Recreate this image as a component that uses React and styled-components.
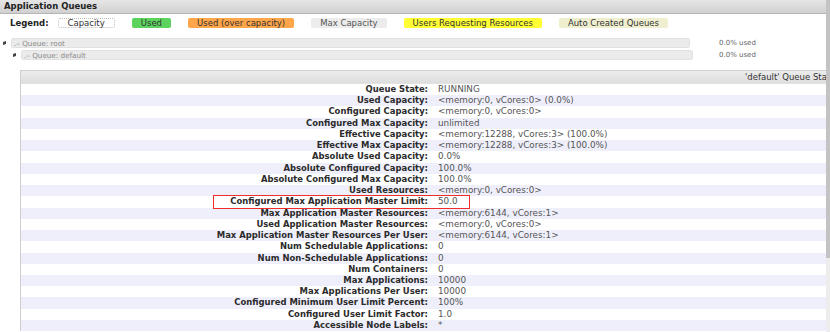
import React from 'react'
import styled, { createGlobalStyle } from 'styled-components'

const GlobalStyle = createGlobalStyle`
  html, body {
    margin: 0;
    padding: 0;
    background: #fff;
    overflow: hidden;
  }
  body {
    font-family: "DejaVu Sans", Verdana, sans-serif;
    color: #333;
  }
`

const Page = styled.div`
  display: flex;
  width: 830px;
  height: 332px;
  overflow: hidden;
`

const Main = styled.div`
  flex: 1;
  min-width: 0;
`

const Scrollbar = styled.div`
  width: 4px;
  flex-shrink: 0;
  background: #ededed;
`

const Thumb = styled.div`
  height: 258px;
  background: #c3c3c3;
`

const Header = styled.div`
  height: 13px;
  line-height: 13px;
  padding-left: 4px;
  background: linear-gradient(#e6e6e6, #d0d0d0);
  border-bottom: 1px solid #b5b5b5;
  font-size: 8.5px;
  font-weight: bold;
  color: #222;
`

const Legend = styled.div`
  display: flex;
  align-items: center;
  gap: 17px;
  margin-top: 4px;
  padding-left: 10px;
  height: 10px;
  font-size: 8.5px;
`

const LegendTitle = styled.span`
  font-weight: bold;
  color: #222;
  margin-right: -8px;
`

const LegendBox = styled.span`
  display: inline-block;
  box-sizing: border-box;
  height: 10px;
  padding: 0 9px;
  border-radius: 2px;
  background: ${p => p.$bg};
  color: ${p => p.$color || '#333'};
  border: ${p => p.$border || 'none'};
  line-height: ${p => (p.$border ? '8px' : '10px')};
`

const Tree = styled.div`
  margin-top: 10px;
  display: flex;
  flex-direction: column;
  gap: 2px;
`

const TreeRow = styled.div`
  display: flex;
  align-items: center;
  height: 10px;
`

const Lead = styled.div`
  display: flex;
  align-items: center;
  width: 716px;
  padding-left: ${p => p.$indent}px;
  box-sizing: border-box;
`

const Bullet = styled.svg`
  width: 4px;
  height: 4px;
  margin-right: 4px;
  flex-shrink: 0;
`

const Bar = styled.div`
  box-sizing: border-box;
  width: ${p => p.$width}px;
  height: 10px;
  line-height: 9px;
  border: 1px dotted #d6d6d6;
  border-radius: 3px;
  background: #ebebeb;
  font-size: 7.2px;
  color: #8a8a8a;
  padding-left: 2px;
  white-space: nowrap;
`

const Used = styled.span`
  font-size: 7px;
  color: #666;
  padding-left: 3px;
`

const Panel = styled.div`
  margin-top: 10px;
  margin-left: 20px;
  border-top: 1px solid #cfcfcf;
  border-left: 1px solid #cfcfcf;
`

const PanelHead = styled.div`
  height: 12px;
  line-height: 12px;
  background: linear-gradient(#ececec, #dedede);
  border-bottom: 1px solid #e2e2e2;
  font-size: 8.5px;
  color: #333;
  padding-left: 724px;
  white-space: nowrap;
  overflow: hidden;
`

const Row = styled.div`
  position: relative;
  display: grid;
  grid-template-columns: 407px 1fr;
  column-gap: 10px;
  height: 11.24px;
  line-height: 11.24px;
  white-space: nowrap;
  background: ${p => (p.$odd ? '#efeffc' : '#fff')};
`

const Label = styled.div`
  text-align: right;
  font-size: 8.45px;
  font-weight: bold;
  color: #2b2b2b;
`

const Value = styled.div`
  font-size: 8.8px;
  color: #555;
`

const Highlight = styled.div`
  position: absolute;
  z-index: 2;
  left: 192px;
  width: 257px;
  top: -1px;
  bottom: -1px;
  border: 1px solid #f02c2c;
  box-sizing: border-box;
  pointer-events: none;
`

const legend = [
  { text: 'Capacity', bg: '#fff', border: '1px dotted #bbb' },
  { text: 'Used', bg: '#5cd35c' },
  { text: 'Used (over capacity)', bg: '#ffa54a' },
  { text: 'Max Capacity', bg: '#ececec', color: '#555' },
  { text: 'Users Requesting Resources', bg: '#ffff33' },
  { text: 'Auto Created Queues', bg: '#efefcf' },
]

const queues = [
  { name: 'root', indent: 3, width: 679 },
  { name: 'default', indent: 13, width: 672 },
]

const rows = [
  ['Queue State:', 'RUNNING'],
  ['Used Capacity:', '<memory:0, vCores:0> (0.0%)'],
  ['Configured Capacity:', '<memory:0, vCores:0>'],
  ['Configured Max Capacity:', 'unlimited'],
  ['Effective Capacity:', '<memory:12288, vCores:3> (100.0%)'],
  ['Effective Max Capacity:', '<memory:12288, vCores:3> (100.0%)'],
  ['Absolute Used Capacity:', '0.0%'],
  ['Absolute Configured Capacity:', '100.0%'],
  ['Absolute Configured Max Capacity:', '100.0%'],
  ['Used Resources:', '<memory:0, vCores:0>'],
  ['Configured Max Application Master Limit:', '50.0', true],
  ['Max Application Master Resources:', '<memory:6144, vCores:1>'],
  ['Used Application Master Resources:', '<memory:0, vCores:0>'],
  ['Max Application Master Resources Per User:', '<memory:6144, vCores:1>'],
  ['Num Schedulable Applications:', '0'],
  ['Num Non-Schedulable Applications:', '0'],
  ['Num Containers:', '0'],
  ['Max Applications:', '10000'],
  ['Max Applications Per User:', '10000'],
  ['Configured Minimum User Limit Percent:', '100%'],
  ['Configured User Limit Factor:', '1.0'],
  ['Accessible Node Labels:', '*'],
]

function App() {
  return (
    <>
      <GlobalStyle />
      <Page>
        <Main>
          <Header>Application Queues</Header>

          <Legend>
            <LegendTitle>Legend:</LegendTitle>
            {legend.map(l => (
              <LegendBox key={l.text} $bg={l.bg} $border={l.border} $color={l.color}>
                {l.text}
              </LegendBox>
            ))}
          </Legend>

          <Tree>
            {queues.map(q => (
              <TreeRow key={q.name}>
                <Lead $indent={q.indent}>
                  <Bullet viewBox="0 0 4 4">
                    <path d="M0 1 L3 0 L3 3 L0 4 Z" fill="#444" />
                  </Bullet>
                  <Bar $width={q.width}>.– Queue: {q.name}</Bar>
                </Lead>
                <Used>0.0% used</Used>
              </TreeRow>
            ))}
          </Tree>

          <Panel>
            <PanelHead>'default' Queue Status</PanelHead>
            {rows.map(([label, value, marked], i) => (
              <Row key={label} $odd={i % 2 === 1}>
                <Label>{label}</Label>
                <Value>{value}</Value>
                {marked && <Highlight />}
              </Row>
            ))}
          </Panel>
        </Main>
        <Scrollbar>
          <Thumb />
        </Scrollbar>
      </Page>
    </>
  )
}

export default App
